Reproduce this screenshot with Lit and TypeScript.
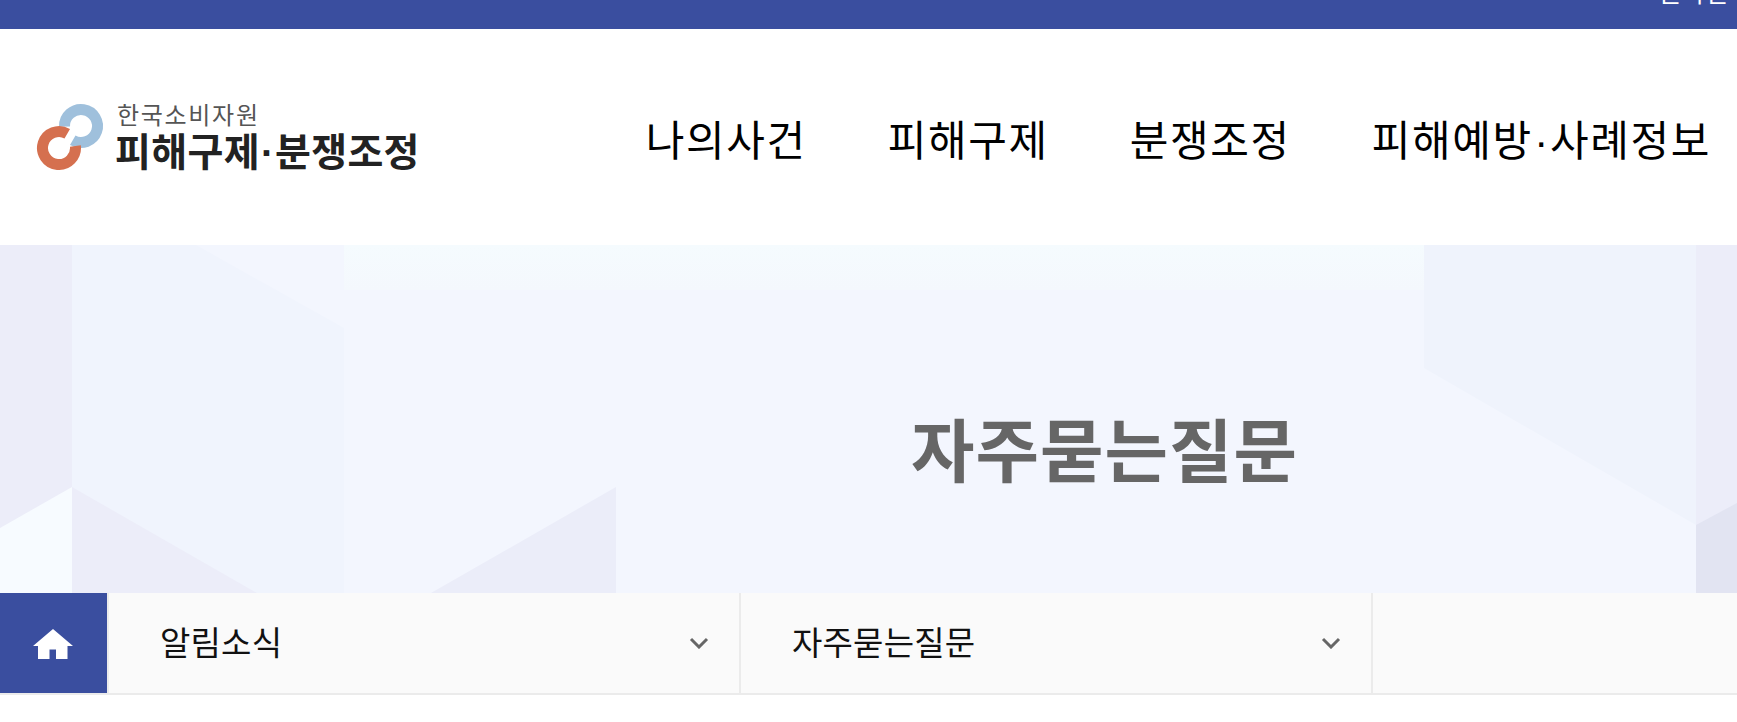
import { LitElement, html, css } from "lit";
import { customElement } from "lit/decorators.js";

@customElement("app-root")
export class AppRoot extends LitElement {
  static styles = css`
    :host { display: block; width: 100%; min-height: 722px; background: #fff; font-family: "Noto Sans CJK KR", "Noto Sans", sans-serif; overflow: hidden; }
    .top { height: 29px; background: #3a4e9f; overflow: hidden; display: flex; justify-content: flex-end; }
    .top span { color: #fff; font-size: 25px; line-height: 30px; margin-top: -24px; white-space: nowrap; width: 78px; overflow: hidden; }
    .head { height: 216px; display: flex; align-items: center; justify-content: space-between; padding: 0 26px 0 36px; box-sizing: border-box; }
    .logo { display: flex; align-items: center; gap: 9px; }
    .logo svg { display: block; flex: none; }
    .lt { display: flex; flex-direction: column; }
    .l1 { font-size: 24px; line-height: 27px; color: #555; letter-spacing: 1.7px; }
    .l2 { font-size: 39px; line-height: 44px; font-weight: 700; color: #222; letter-spacing: 0.35px; margin-left: -2px; white-space: nowrap; }
    .dot { font-family: "Liberation Sans", sans-serif; padding: 0 1px; letter-spacing: 0; }
    nav { display: flex; gap: 81px; padding-top: 6px; }
    nav a { font-size: 42px; font-weight: 400; line-height: 60px; color: #000; letter-spacing: 1.6px; white-space: nowrap; }
    nav .dot { padding: 0 1.7px; }
    .hero { position: relative; height: 348px; background: #f3f6fe; display: flex; align-items: center; justify-content: center; }
    .hero svg { position: absolute; inset: 0; width: 100%; height: 100%; }
    h1 { position: relative; margin: 56px 0 0 472px; font-size: 69px; line-height: 80px; font-weight: 700; color: #666; letter-spacing: 1px; }
    .crumb { height: 102px; box-sizing: border-box; border-bottom: 2px solid #ebebeb; display: flex; background: #fafafa; }
    .home { width: 107px; background: #3a4e9f; display: flex; align-items: center; justify-content: center; flex: none; }
    .home svg { margin: 2px 1px 0 0; }
    .item { width: 632px; box-sizing: border-box; border-left: 2px solid #ebebeb; display: flex; align-items: center; justify-content: space-between; padding: 0 30px 0 51px; font-size: 33px; letter-spacing: 0.2px; color: #111; flex: none; }
    .item span { margin-bottom: 4px; }
    .rest { flex: 1; border-left: 2px solid #ebebeb; }
    .chev { display: block; }
  `;

  private chevron() {
    return html`<svg class="chev" width="20" height="12" viewBox="0 0 20 12"><path d="M2 2l8 8 8-8" fill="none" stroke="#666" stroke-width="3"/></svg>`;
  }

  render() {
    return html`
      <div class="top"><span>온라인피해구제</span></div>
      <header class="head">
        <div class="logo">
          <svg width="72" height="70" viewBox="36 100 72 70">
            <path d="M64.51 124.58A16.5 16.5 0 1 1 72.75 138.29" fill="none" stroke="#9fc0dc" stroke-width="11"/>
            <path d="M75.38 143.99A16.5 16.5 0 1 1 67.25 131.71" fill="none" stroke="#d5704f" stroke-width="11"/>
          </svg>
          <div class="lt"><span class="l1">한국소비자원</span><span class="l2">피해구제<span class="dot">·</span>분쟁조정</span></div>
        </div>
        <nav><a>나의사건</a><a>피해구제</a><a>분쟁조정</a><a>피해예방<span class="dot">·</span>사례정보</a></nav>
      </header>
      <section class="hero">
        <svg viewBox="0 245 1737 348" preserveAspectRatio="none">
          <defs>
            <linearGradient id="band" x1="0" y1="0" x2="0" y2="1"><stop offset="0" stop-color="#f5fbfe"/><stop offset="1" stop-color="#f4f8fd"/></linearGradient>
          </defs>
          <rect x="344" y="245" width="1080" height="45" fill="url(#band)"/>
          <rect x="0" y="245" width="72" height="348" fill="#ecedf9"/>
          <polygon points="0,528 72,487 72,593 0,593" fill="#f7fbff"/>
          <polygon points="72,245 196,245 344,328 344,593 72,593" fill="#f0f4fd"/>
          <polygon points="72,487 257,593 72,593" fill="#ecedf9"/>
          <polygon points="616,487 431,593 616,593" fill="#ebedf9"/>
          <polygon points="1424,245 1696,245 1696,525 1424,368" fill="#eff3fc"/>
          <rect x="1696" y="245" width="41" height="348" fill="#ecedf9"/>
          <polygon points="1696,525 1737,503 1737,593 1696,593" fill="#e2e4f2"/>
        </svg>
        <h1>자주묻는질문</h1>
      </section>
      <div class="crumb">
        <div class="home">
          <svg width="40" height="30" viewBox="0 0 40 30"><path d="M20 0L40 17H34.5V30H23V20.5H16.5V30H5V17H0Z" fill="#fff"/></svg>
        </div>
        <div class="item"><span>알림소식</span>${this.chevron()}</div>
        <div class="item"><span>자주묻는질문</span>${this.chevron()}</div>
        <div class="rest"></div>
      </div>
    `;
  }
}
